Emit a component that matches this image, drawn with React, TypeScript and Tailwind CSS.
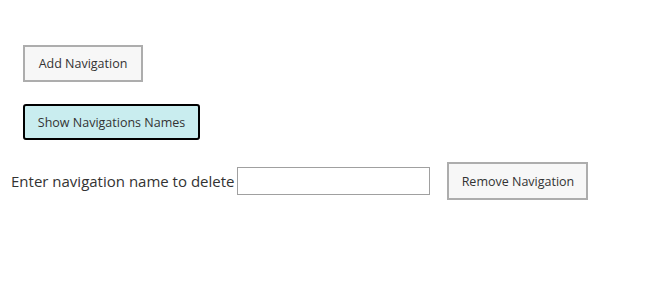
export default function App() {
  return (
    <div className="w-[650px] h-[282px] bg-white font-['Open_Sans',sans-serif] text-[#222]">
      <div className="flex flex-col items-start pt-[45px] pl-[23px]">
        <button className="h-[37px] w-[120px] border-2 border-[#adadad] bg-[#f7f7f7] pt-[2px] text-[12.5px] text-[#333]">
          Add Navigation
        </button>
        <button className="mt-[22px] h-[36px] w-[177px] rounded-[3px] border-2 border-black bg-[#c9edef] pt-[2px] text-[12.5px] text-[#333]">
          Show Navigations Names
        </button>
      </div>
      <div className="mt-[22px] flex items-center pl-[11px]">
        <label className="text-[15px] text-[#333]">Enter navigation name to delete</label>
        <input
          type="text"
          className="ml-[3px] h-[28px] w-[193px] border border-[#a0a0a0] bg-white outline-none"
        />
        <button className="ml-[17px] h-[38px] w-[141px] border-2 border-[#adadad] bg-[#f7f7f7] pt-[2px] text-[12.5px] text-[#333]">
          Remove Navigation
        </button>
      </div>
    </div>
  );
}
